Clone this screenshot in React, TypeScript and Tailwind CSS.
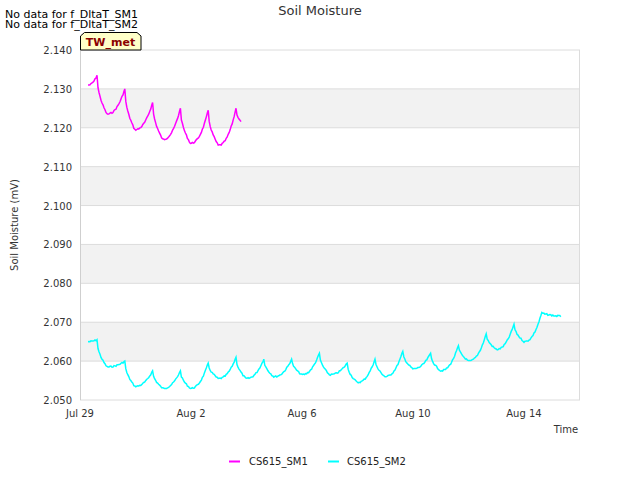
import React from "react";

const Y = (v: number) => 50 + ((2.14 - v) / 0.09) * 350;

function series(peaks: number[], troughs: number[], startX: number, startV: number, endX: number, endV: number, noise: number) {
  const pts: [number, number][] = [];
  let seed = 7;
  const rnd = () => { seed = (seed * 9301 + 49297) % 233280; return seed / 233280 - 0.5; };
  pts.push([startX, Y(startV)]);
  for (let i = 0; i < peaks.length; i++) {
    const px = 97 + i * 27.8;
    const prevX = i === 0 ? startX : 97 + (i - 1) * 27.8 + 10;
    const prevV = i === 0 ? startV : troughs[i - 1];
    // rise from previous trough to peak
    for (let x = prevX + 1; x < px; x += 1) {
      const t = (x - prevX) / (px - prevX);
      const v = prevV + (peaks[i] - prevV) * Math.pow(t, 2.2);
      pts.push([x, Y(v) + rnd() * noise]);
    }
    pts.push([px, Y(peaks[i])]);
    const tx = px + 10;
    const endT = i < troughs.length ? troughs[i] : endV;
    const lim = i < troughs.length ? tx : endX;
    for (let x = px + 1; x <= lim; x += 1) {
      const t = (x - px) / (lim - px);
      const v = peaks[i] + (endT - peaks[i]) * Math.sqrt(t);
      pts.push([x, Y(v) + rnd() * noise]);
    }
  }
  return pts.map((p) => p[0].toFixed(1) + "," + p[1].toFixed(1)).join(" ");
}

const sm1 = series(
  [2.1335, 2.130, 2.1265, 2.125, 2.1245, 2.125],
  [2.1235, 2.1195, 2.117, 2.116, 2.1155],
  88, 2.131, 241, 2.1215, 1.5
);
const sm2 = series(
  [2.0655, 2.060, 2.0575, 2.0575, 2.0595, 2.061, 2.0605, 2.0605, 2.062, 2.0595, 2.0605, 2.0625, 2.062, 2.064, 2.067, 2.0695, 2.0725],
  [2.0585, 2.0535, 2.053, 2.053, 2.0555, 2.0555, 2.056, 2.0565, 2.0565, 2.0545, 2.056, 2.058, 2.0575, 2.060, 2.063, 2.065],
  88, 2.065, 561, 2.0715, 1.5
);

const ticksY = [2.14, 2.13, 2.12, 2.11, 2.1, 2.09, 2.08, 2.07, 2.06, 2.05];
const ticksX: [number, string][] = [[80, "Jul 29"], [191, "Aug 2"], [302, "Aug 6"], [413, "Aug 10"], [524, "Aug 14"]];

export default function App() {
  return (
    <div className="w-[640px] h-[480px] bg-white" style={{ fontFamily: '"DejaVu Sans", sans-serif' }}>
      <svg width="640" height="480" className="block">
        <rect x="80" y="50" width="500" height="350" fill="#fff" />
        {[2.13, 2.11, 2.09, 2.07].map((v) => (
          <rect key={v} x="80" y={Y(v)} width="500" height={Y(v - 0.01) - Y(v)} fill="#f2f2f2" />
        ))}
        {ticksY.map((v) => (
          <g key={v}>
            <line x1="80" x2="580" y1={Y(v)} y2={Y(v)} stroke="#dcdcdc" strokeWidth="1" />
            <text x="72" y={Y(v) + 4} textAnchor="end" fontSize="10" fill="#333">{v.toFixed(3)}</text>
          </g>
        ))}
        <line x1="80.5" x2="80.5" y1="50" y2="400" stroke="#cfcfcf" />
        <line x1="579.5" x2="579.5" y1="50" y2="400" stroke="#dcdcdc" />
        {ticksX.map(([x, l]) => (
          <text key={l} x={x} y="417" textAnchor="middle" fontSize="10" fill="#333">{l}</text>
        ))}
        <polyline points={sm1} fill="none" stroke="#ff00ff" strokeWidth="1.5" />
        <polyline points={sm2} fill="none" stroke="#00ffff" strokeWidth="1.5" />
        <text x="320" y="15" textAnchor="middle" fontSize="13" fill="#333">Soil Moisture</text>
        <text x="5" y="18" fontSize="11" fill="#000">No data for f_DltaT_SM1</text>
        <text x="5" y="28" fontSize="11" fill="#000">No data for f_DltaT_SM2</text>
        <polygon points="80.5,50 80.5,36 84.5,32.5 137,32.5 141,36 141,50" fill="#ffffc8" stroke="#000" strokeWidth="1" />
        <text x="110.5" y="46" textAnchor="middle" fontSize="11" fontWeight="bold" fill="#8b0000">TW_met</text>
        <text x="566" y="433" textAnchor="middle" fontSize="10" fill="#333">Time</text>
        <text transform="translate(18,225) rotate(-90)" textAnchor="middle" fontSize="10" fill="#333">Soil Moisture (mV)</text>
        <line x1="229" x2="240" y1="461.5" y2="461.5" stroke="#ff00ff" strokeWidth="2" />
        <text x="249" y="465" fontSize="10" fill="#222">CS615_SM1</text>
        <line x1="328" x2="339" y1="461.5" y2="461.5" stroke="#00ffff" strokeWidth="2" />
        <text x="347" y="465" fontSize="10" fill="#222">CS615_SM2</text>
      </svg>
    </div>
  );
}
